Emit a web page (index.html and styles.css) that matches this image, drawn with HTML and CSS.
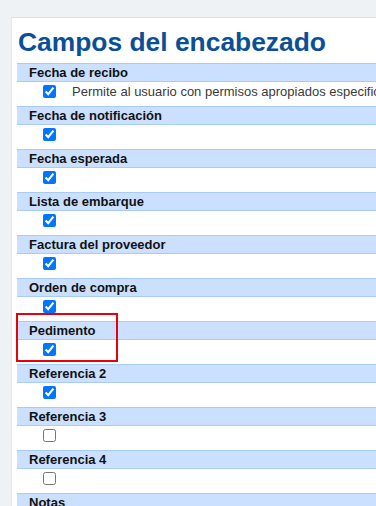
FILE: index.html
```html
<!DOCTYPE html>
<html lang="es">
<head>
  <meta charset="UTF-8">
  <meta name="viewport" content="width=device-width, initial-scale=1.0">
  <title>Campos del encabezado</title>

  <link rel="stylesheet" href="styles.css">
</head>
<body>
  <main class="panel">
    <h1>Campos del encabezado</h1>

    <section class="field">
      <header class="field-head">Fecha de recibo</header>
      <div class="field-body">
        <input type="checkbox" checked>
        <span class="field-desc">Permite al usuario con permisos apropiados especificar la fecha de recibo de la mercancía</span>
      </div>
    </section>

    <section class="field">
      <header class="field-head">Fecha de notificación</header>
      <div class="field-body"><input type="checkbox" checked></div>
    </section>

    <section class="field">
      <header class="field-head">Fecha esperada</header>
      <div class="field-body"><input type="checkbox" checked></div>
    </section>

    <section class="field">
      <header class="field-head">Lista de embarque</header>
      <div class="field-body"><input type="checkbox" checked></div>
    </section>

    <section class="field">
      <header class="field-head">Factura del proveedor</header>
      <div class="field-body"><input type="checkbox" checked></div>
    </section>

    <section class="field">
      <header class="field-head">Orden de compra</header>
      <div class="field-body"><input type="checkbox" checked></div>
    </section>

    <section class="field highlighted">
      <header class="field-head">Pedimento</header>
      <div class="field-body"><input type="checkbox" checked></div>
      <span class="highlight-box"></span>
    </section>

    <section class="field">
      <header class="field-head">Referencia 2</header>
      <div class="field-body"><input type="checkbox" checked></div>
    </section>

    <section class="field">
      <header class="field-head">Referencia 3</header>
      <div class="field-body"><input type="checkbox"></div>
    </section>

    <section class="field">
      <header class="field-head">Referencia 4</header>
      <div class="field-body"><input type="checkbox"></div>
    </section>

    <section class="field">
      <header class="field-head">Notas</header>
      <div class="field-body"></div>
    </section>
  </main>
</body>
</html>
```

FILE: styles.css
```css
* {
  margin: 0;
  padding: 0;
  box-sizing: border-box;
}

body {
  background: #eff2f5;
  font: 13px 'Liberation Sans', Arial, sans-serif;
  color: #333333;
  overflow: hidden;
  padding: 17px 0 0 11px;
}

.panel {
  width: 640px;
  min-height: 600px;
  background: #ffffff;
  border-top: 1px solid #dde1e6;
  border-left: 1px solid #e3e6ea;
  padding: 0 5px;
}

.panel h1 {
  margin: 9px 0 6px 1px;
  font-size: 26.4px;
  line-height: 30px;
  font-weight: 700;
  color: #0b4f99;
}

.field {
  position: relative;
}

.field-head {
  height: 19px;
  padding-left: 12px;
  background: #cbe0fe;
  border-top: 1px solid #a8cbf7;
  border-bottom: 1px solid #a8cbf7;
  font-weight: 700;
  line-height: 17px;
  color: #111111;
}

.field-body {
  height: 24px;
  padding-left: 22px;
  display: flex;
  align-items: flex-start;
  white-space: nowrap;
}

.field-body input {
  margin: 3px 3px 3px 4px;
  width: 13px;
  height: 13px;
}

.field-desc {
  margin-left: 13px;
  line-height: 19px;
  color: #3a3a3a;
}

.highlight-box {
  position: absolute;
  left: -1px;
  top: -8px;
  width: 102px;
  height: 49px;
  border: 2px solid #e8000b;
  pointer-events: none;
}
```
